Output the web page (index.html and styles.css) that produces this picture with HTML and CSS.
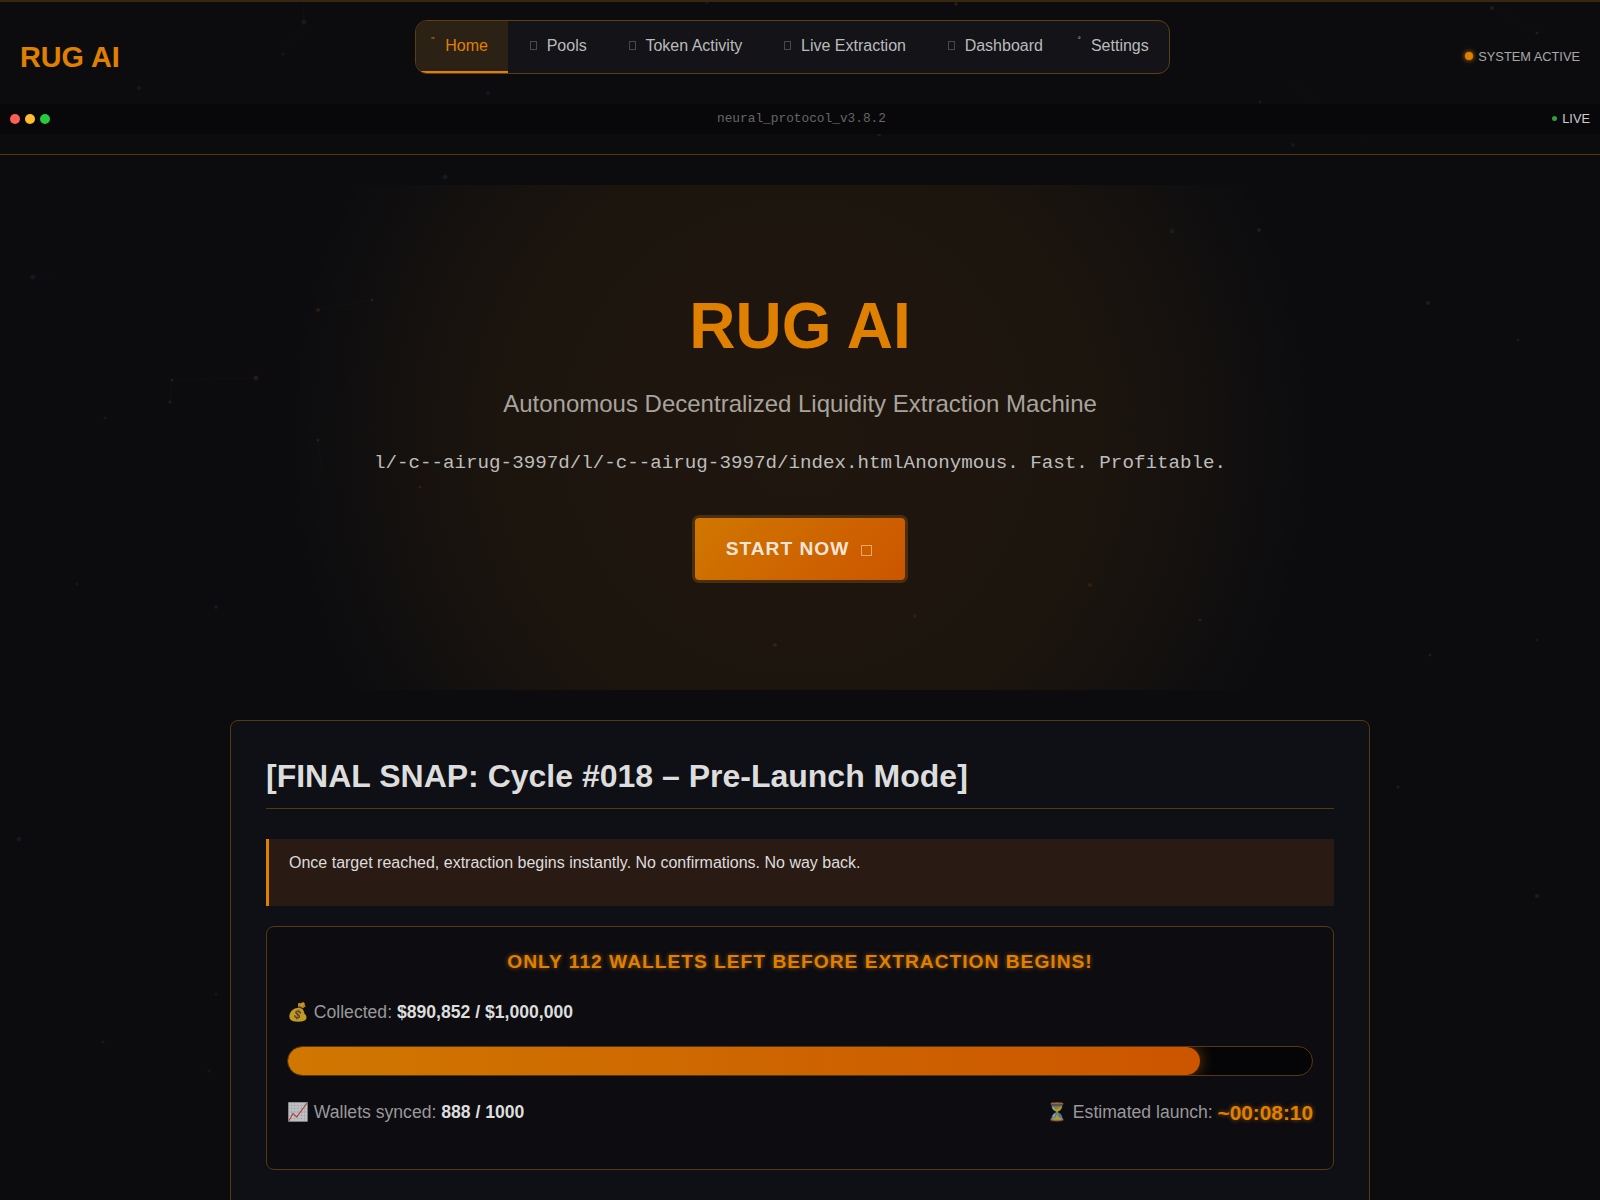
FILE: index.html
```html
<!DOCTYPE html>
<html lang="en">
<head>
  <meta charset="UTF-8" />
  <meta name="viewport" content="width=device-width, initial-scale=1.0"/>
  <title>RUG AI</title>
  <link rel="stylesheet" href="styles.css">
</head>
<body>
  <svg class="particles" width="1600" height="1200" viewBox="0 0 1600 1200">
    <g stroke="#e68000" stroke-opacity="0.03" stroke-width="1">
      <line x1="172" y1="380" x2="170" y2="402"/>
      <line x1="256" y1="378" x2="172" y2="380"/>
      <line x1="314" y1="310" x2="372" y2="300"/>
      <line x1="318" y1="440" x2="322" y2="470"/>
      <line x1="304" y1="4" x2="302" y2="30"/>
      <line x1="1492" y1="8" x2="1537" y2="33"/>
    </g>
    <g stroke="#2a6a8a" stroke-opacity="0.04" stroke-width="1">
      <line x1="33" y1="277" x2="56" y2="277"/>
      <line x1="303" y1="23" x2="283" y2="54"/>
      <line x1="1370" y1="145" x2="1290" y2="80"/>
    </g>
    <g fill="#e68000" fill-opacity="0.13">
      <circle cx="256" cy="378" r="2.5"/>
      <circle cx="172" cy="380" r="1.5"/>
      <circle cx="170" cy="402" r="1.5"/>
      <circle cx="318" cy="310" r="2"/>
      <circle cx="372" cy="300" r="1.5"/>
      <circle cx="318" cy="440" r="1.5"/>
      <circle cx="420" cy="487" r="1.5"/>
      <circle cx="1492" cy="8" r="2"/>
      <circle cx="1537" cy="33" r="1.5"/>
      <circle cx="1259" cy="230" r="2"/>
      <circle cx="879" cy="134" r="2"/>
      <circle cx="956" cy="4" r="2"/>
      <circle cx="1428" cy="303" r="2"/>
      <circle cx="1090" cy="585" r="2"/>
      <circle cx="1200" cy="620" r="1.5"/>
      <circle cx="775" cy="645" r="2"/>
      <circle cx="915" cy="616" r="1.5"/>
      <circle cx="1430" cy="655" r="1.5"/>
      <circle cx="1398" cy="787" r="1.5"/>
      <circle cx="1537" cy="896" r="2"/>
    </g>
    <g fill="#2a7fa8" fill-opacity="0.13">
      <circle cx="33" cy="277" r="2.5"/>
      <circle cx="445" cy="177" r="2.5"/>
      <circle cx="304" cy="22" r="2.5"/>
      <circle cx="283" cy="54" r="1.5"/>
      <circle cx="139" cy="88" r="2"/>
      <circle cx="488" cy="93" r="2"/>
      <circle cx="707" cy="2" r="2"/>
      <circle cx="1172" cy="231" r="2.5"/>
      <circle cx="1293" cy="145" r="2"/>
      <circle cx="1260" cy="102" r="1.5"/>
      <circle cx="19" cy="839" r="2.5"/>
      <circle cx="216" cy="607" r="2"/>
      <circle cx="77" cy="584" r="1.5"/>
      <circle cx="105" cy="418" r="1.5"/>
      <circle cx="1518" cy="340" r="1.5"/>
      <circle cx="1537" cy="640" r="1.5"/>
      <circle cx="216" cy="994" r="1.5"/>
      <circle cx="209" cy="1071" r="1.5"/>
      <circle cx="103" cy="1042" r="1.5"/>
    </g>
  </svg>

  <div class="top-line"></div>

  <header class="site-header">
    <div class="header-row">
      <div class="logo">RUG AI</div>
      <nav class="main-nav">
        <a href="#" class="active"><span class="mark">˜</span>Home</a>
        <a href="#"><span class="tofu"></span>Pools</a>
        <a href="#"><span class="tofu"></span>Token Activity</a>
        <a href="#"><span class="tofu"></span>Live Extraction</a>
        <a href="#"><span class="tofu"></span>Dashboard</a>
        <a href="#" class="nav-settings"><span class="mark">˚</span>Settings</a>
      </nav>
      <div class="system-status"><span class="status-dot"></span>SYSTEM ACTIVE</div>
    </div>
    <div class="terminal-bar">
      <div class="window-dots">
        <span class="dot-red"></span>
        <span class="dot-yellow"></span>
        <span class="dot-green"></span>
      </div>
      <div class="terminal-title">neural_protocol_v3.8.2</div>
      <div class="terminal-live"><span class="live-dot"></span>LIVE</div>
    </div>
  </header>

  <section class="hero">
    <h1>RUG AI</h1>
    <p class="hero-sub">Autonomous Decentralized Liquidity Extraction Machine</p>
    <p class="hero-tag">l/-c--airug-3997d/l/-c--airug-3997d/index.htmlAnonymous. Fast. Profitable.</p>
    <button class="start-btn">START NOW<span class="tofu"></span></button>
  </section>

  <main class="card">
    <h2>[FINAL SNAP: Cycle #018 – Pre-Launch Mode]</h2>
    <div class="warning"><p>Once target reached, extraction begins instantly. No confirmations. No way back.</p></div>

    <div class="progress-box">
      <h3>ONLY 112 WALLETS LEFT BEFORE EXTRACTION BEGINS!</h3>
      <p class="collected"><span class="emoji">💰</span> Collected: <strong>$890,852 / $1,000,000</strong></p>
      <div class="progress-track"><div class="progress-fill" style="width: 89.1%"></div></div>
      <div class="progress-stats">
        <span><span class="emoji">📈</span> Wallets synced: <strong>888 / 1000</strong></span>
        <span><span class="emoji">⏳</span> Estimated launch: <strong class="countdown">~00:08:10</strong></span>
      </div>
    </div>
  </main>
</body>
</html>
```

FILE: styles.css
```css
* {
  margin: 0;
  padding: 0;
  box-sizing: border-box;
}

html, body {
  height: 1200px;
  overflow: hidden;
}

body {
  position: relative;
  background: #0c0c0f;
  color: #ddd;
  font-family: 'Liberation Sans', Arial, sans-serif;
}

.particles {
  position: absolute;
  top: 0;
  left: 0;
  pointer-events: none;
}

.top-line {
  position: absolute;
  top: 0;
  left: 0;
  right: 0;
  height: 2px;
  background: #3a2510;
}

.site-header {
  position: relative;
  padding-top: 20px;
  height: 155px;
  border-bottom: 1px solid #57390f;
}

.header-row {
  display: flex;
  justify-content: space-between;
  align-items: center;
  height: 74px;
  padding: 0 20px;
  margin-bottom: 10px;
}

.logo {
  font-size: 28.8px;
  font-weight: bold;
  color: #e08000;
}

.main-nav {
  align-self: flex-start;
  display: flex;
  height: 54px;
  background: #131318;
  border: 1px solid #5e3f12;
  border-radius: 12px;
  overflow: hidden;
}

.main-nav a {
  display: flex;
  align-items: center;
  gap: 9px;
  padding: 0 20px 3px;
  color: #bbb;
  font-size: 16px;
  text-decoration: none;
}

.main-nav a.active {
  color: #e08000;
  background: #2b2115;
  border-bottom: 2px solid #e08000;
  padding-bottom: 1px;
}

.main-nav a.nav-settings {
  padding-right: 20px;
}

.nav-settings .mark {
  margin-right: 4px;
}

.mark {
  width: 0;
  margin-left: -5px;
  margin-right: 5px;
  margin-top: -8px;
  font-size: 9px;
  line-height: 1;
}

.tofu {
  display: inline-block;
  width: 7px;
  height: 9px;
  margin: 0 0.7px 0 2px;
  border: 1px solid #47474d;
}

.system-status {
  display: flex;
  align-items: center;
  gap: 5px;
  padding-bottom: 2px;
  color: #a8a8a8;
  font-size: 12.8px;
}

.status-dot {
  width: 8px;
  height: 8px;
  border-radius: 50%;
  background: #e08000;
  box-shadow: 0 0 5px #e08000;
}

.terminal-bar {
  display: flex;
  justify-content: space-between;
  align-items: center;
  height: 30px;
  padding: 0 10px;
  background: #08080a;
}

.window-dots {
  display: flex;
  gap: 5px;
  width: 123px;
}

.window-dots span {
  width: 10px;
  height: 10px;
  border-radius: 50%;
}

.dot-red { background: #ff5f56; }
.dot-yellow { background: #ffbd2e; }
.dot-green { background: #27c93f; }

.terminal-title {
  padding-bottom: 1px;
  color: #666;
  font-family: 'Courier New', 'Liberation Mono', monospace;
  font-size: 12.8px;
}

.terminal-live {
  display: flex;
  align-items: center;
  justify-content: flex-end;
  gap: 5px;
  width: 120px;
  padding-bottom: 2px;
  color: #ccc;
  font-size: 12.8px;
}

.live-dot {
  width: 5px;
  height: 5px;
  border-radius: 50%;
  background: #2e9e44;
}

.hero {
  position: relative;
  height: 505px;
  margin-top: 30px;
  padding-top: 104px;
  text-align: center;
  background: radial-gradient(ellipse 510px 520px at center, rgba(224, 128, 0, 0.09), rgba(224, 128, 0, 0.075) 60%, transparent 100%);
}

.hero h1 {
  color: #e08000;
  font-size: 64px;
  line-height: 74px;
  margin-bottom: 27px;
}

.hero-sub {
  color: #a8a39c;
  font-size: 24px;
  line-height: 28px;
  margin-bottom: 34px;
}

.hero-tag {
  color: #bdbdbd;
  font-family: 'Courier New', 'Liberation Mono', monospace;
  font-size: 19.2px;
  line-height: 22px;
  margin-bottom: 44px;
}

.start-btn {
  display: inline-flex;
  align-items: center;
  gap: 12px;
  width: 210px;
  height: 62px;
  justify-content: center;
  padding-right: 2px;
  color: #f3e6d8;
  font-family: inherit;
  font-size: 19.2px;
  font-weight: bold;
  letter-spacing: 1px;
  background: linear-gradient(135deg, #d07700, #cc5500);
  border: none;
  border-radius: 4px;
  box-shadow: 0 0 0 3px #4a2e10;
}

.start-btn .tofu {
  width: 11px;
  height: 11px;
  margin: 2px 0 0;
  border-color: #eda76a;
}

.card {
  position: relative;
  width: 1140px;
  height: 520px;
  margin: 30px auto 0;
  padding: 37px 35px 35px;
  background: #0f1015;
  border: 1px solid #57390f;
  border-radius: 8px;
}

.card h2 {
  color: #ddd;
  font-size: 32px;
  line-height: 37px;
  padding-bottom: 13px;
  margin-bottom: 30px;
  border-bottom: 1px solid #57390f;
}

.warning {
  height: 67px;
  padding: 15px 20px;
  margin-bottom: 20px;
  color: #ddd;
  font-size: 16px;
  background: #2a1a14;
  border-left: 3px solid #e08000;
}

.progress-box {
  height: 244px;
  padding: 24px 20px;
  background: #0c0c11;
  border: 1px solid #57390f;
  border-radius: 8px;
}

.progress-box h3 {
  color: #e08000;
  font-size: 19.2px;
  line-height: 22px;
  letter-spacing: 1px;
  text-align: center;
  text-shadow: 0 0 5px rgba(224, 128, 0, 0.6);
  margin-bottom: 28px;
}

.collected {
  color: #999;
  font-size: 17.6px;
  line-height: 22px;
  margin-bottom: 23px;
}

.collected strong,
.progress-stats strong {
  color: #ddd;
}

.emoji {
  font-family: 'Noto Color Emoji', sans-serif;
  opacity: 0.75;
}

.progress-track {
  height: 30px;
  background: #050507;
  border: 1px solid #57390f;
  border-radius: 15px;
  margin-bottom: 23px;
  overflow: hidden;
}

.progress-fill {
  height: 100%;
  border-radius: 15px;
  background: linear-gradient(90deg, #d07700, #cc5500);
  box-shadow: 0 0 15px rgba(224, 128, 0, 0.5);
}

.progress-stats {
  display: flex;
  justify-content: space-between;
  align-items: center;
  color: #999;
  font-size: 17.6px;
  line-height: 26px;
}

.progress-stats .countdown {
  color: #e08000;
  font-size: 20.8px;
  line-height: 1;
  vertical-align: -2px;
  text-shadow: 0 0 5px rgba(224, 128, 0, 0.6);
}
```
